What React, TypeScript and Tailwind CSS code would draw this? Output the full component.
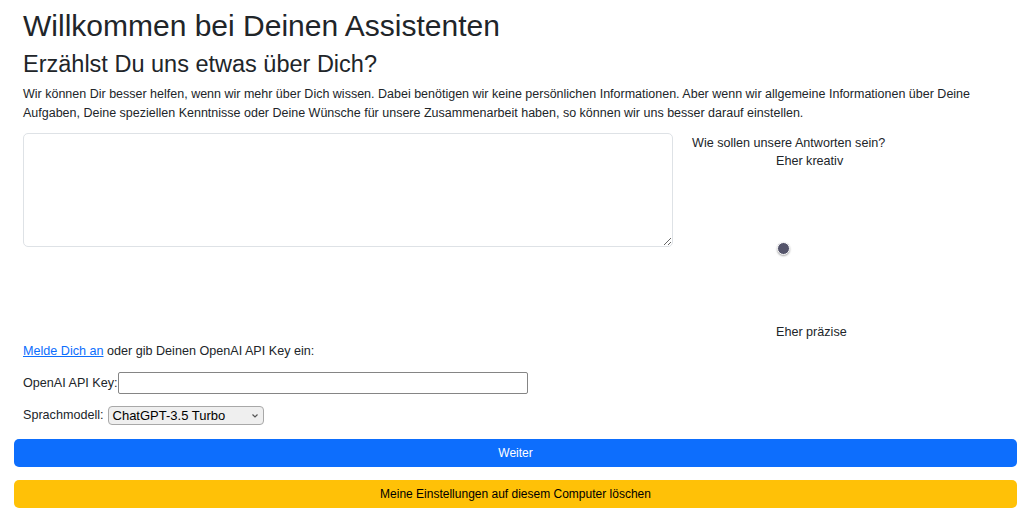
import React from "react";

export default function App() {
  return (
    <div className="w-[1024px] h-[510px] bg-white text-[#212529] font-['Liberation_Sans',Arial,sans-serif] px-[14px] overflow-hidden">
      <div className="px-[9px] pt-[6px]">
        <h1 className="text-[30px] leading-[40px] font-normal">Willkommen bei Deinen Assistenten</h1>
        <h2 className="text-[23.5px] leading-[30px] font-normal mt-[3px]">Erzählst Du uns etwas über Dich?</h2>
        <p className="text-[12.5px] leading-[19px] mt-[6px]">
          Wir können Dir besser helfen, wenn wir mehr über Dich wissen. Dabei benötigen wir keine persönlichen Informationen. Aber wenn wir allgemeine Informationen über Deine Aufgaben, Deine speziellen Kenntnisse oder Deine Wünsche für unsere Zusammenarbeit haben, so können wir uns besser darauf einstellen.
        </p>
        <div className="flex mt-[10px]">
          <div className="w-[650px] shrink-0">
            <textarea className="w-[650px] h-[114px] border border-[#dee2e6] rounded-[5px] block resize-y outline-none" />
          </div>
          <div className="ml-[19px] h-[209px] text-[12.6px] leading-[16px] flex flex-col">
            <div className="mt-[2px]">Wie sollen unsere Antworten sein?</div>
            <div className="ml-[84px] mt-[2px]">Eher kreativ</div>
            <div className="flex-1 flex items-center ml-[85px]">
              <div className="w-[13px] h-[13px] rounded-full bg-[#55556b] border-[1.5px] border-white shadow-[0_1px_2px_rgba(0,0,0,0.35)] mt-[3px]" />
            </div>
            <div className="ml-[84px] mb-[2px]">Eher präzise</div>
          </div>
        </div>
        <div className="text-[12.6px] leading-[16px] mt-[1px]">
          <a href="#" className="text-[#0d6efd] underline">Melde Dich an</a> oder gib Deinen OpenAI API Key ein:
        </div>
        <div className="text-[12.6px] flex items-center mt-[13px]">
          <span>OpenAI API Key:</span>
          <input className="w-[410px] h-[22px] border border-[#858585] rounded-[2px] outline-none" />
        </div>
        <div className="text-[12.6px] flex items-center mt-[12px]">
          <span>Sprachmodell:</span>
          <div className="ml-[4px] w-[156px] h-[19px] border border-[#a8a8a8] rounded-[4px] bg-[#efefef] flex items-center px-[4px] text-[13px] leading-[16px] text-black">
            <span className="flex-1">ChatGPT-3.5 Turbo</span>
            <svg width="8" height="6" viewBox="0 0 8 6"><path d="M1.5 1.5 L4 4 L6.5 1.5" fill="none" stroke="#555" strokeWidth="1.2" /></svg>
          </div>
        </div>
      </div>
      <div className="mt-[14px] flex flex-col gap-[13px]">
        <button className="w-[1003px] h-[28px] rounded-[5px] bg-[#0d6efd] text-white text-[12px]">Weiter</button>
        <button className="w-[1003px] h-[28px] rounded-[5px] bg-[#ffc107] text-black text-[12px]">Meine Einstellungen auf diesem Computer löschen</button>
      </div>
    </div>
  );
}
